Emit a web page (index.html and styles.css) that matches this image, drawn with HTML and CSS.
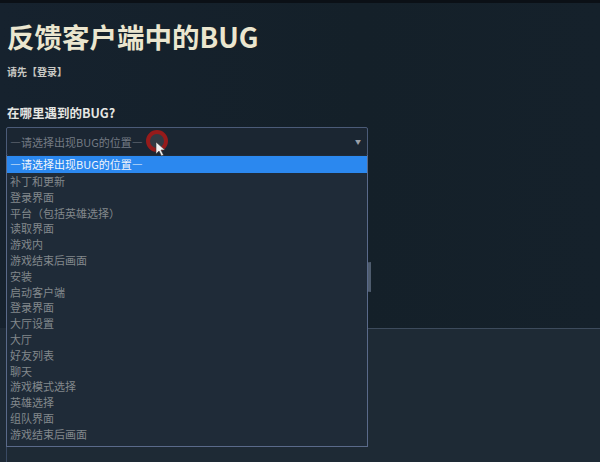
FILE: index.html
```html
<!DOCTYPE html>
<html lang="zh-CN">
<head>
  <meta charset="UTF-8">
  <meta name="viewport" content="width=device-width, initial-scale=1.0">
  <title>反馈客户端中的BUG</title>
  <link rel="stylesheet" href="styles.css">
</head>
<body>
  <div class="topbar"></div>

  <main class="report">
    <h1>反馈客户端中的BUG</h1>
    <p class="login-hint">请先【<a href="#">登录</a>】</p>

    <label class="field-label">在哪里遇到的BUG?</label>
    <div class="select-wrap">
      <div class="select-box">
        <span class="placeholder">—请选择出现BUG的位置—</span>
        <span class="arrow">▼</span>
      </div>

      <!-- open dropdown list -->
      <ul class="options">
        <li class="active">—请选择出现BUG的位置—</li>
        <li>补丁和更新</li>
        <li>登录界面</li>
        <li>平台（包括英雄选择）</li>
        <li>读取界面</li>
        <li>游戏内</li>
        <li>游戏结束后画面</li>
        <li>安装</li>
        <li>启动客户端</li>
        <li>登录界面</li>
        <li>大厅设置</li>
        <li>大厅</li>
        <li>好友列表</li>
        <li>聊天</li>
        <li>游戏模式选择</li>
        <li>英雄选择</li>
        <li>组队界面</li>
        <li>游戏结束后画面</li>
      </ul>

      <!-- recording cursor highlight -->
      <svg class="cursor" width="30" height="30" viewBox="0 0 30 30">
        <circle cx="13" cy="12" r="9" fill="rgba(120,120,120,0.25)" stroke="#961b1b" stroke-width="4"/>
        <path d="M12 13 L12 25 L15 22 L17.5 27 L19.5 26 L17 21 L21 21 Z" fill="#f2f2f2" stroke="#333" stroke-width="0.6"/>
      </svg>
    </div>

    <div class="detail-box"></div>
  </main>

  <section class="lower-panel"></section>
</body>
</html>
```

FILE: styles.css
```css
/* Page base */
body {
  margin: 0;
  font-family: "Noto Sans CJK SC", "Noto Sans", sans-serif;
  background: #1e2a36;
  color: #e4e2d4;
  height: 462px;
  overflow: hidden;
}

.topbar {
  height: 3px;
  background: #0b1016;
}

/* Upper form area */
.report {
  height: 325px;
  padding: 0 7px;
  box-sizing: border-box;
  background: linear-gradient(90deg, #16222e 0%, #142029 60%, #15212b 100%);
}

.report h1 {
  margin: 0;
  padding-top: 14px;
  font-size: 27.5px;
  line-height: 38px;
  font-weight: bold;
  color: #ebe6cf;
}

.login-hint {
  margin: 10px 0 0;
  font-size: 10px;
  line-height: 14px;
  font-weight: bold;
  color: #c9c9c4;
}

.login-hint a {
  color: #c9c9c4;
  text-decoration: none;
}

.field-label {
  display: block;
  margin-top: 25px;
  font-size: 12.5px;
  line-height: 18px;
  font-weight: bold;
  color: #e6e6e2;
}

/* Select field */
.select-wrap {
  position: relative;
  width: 362px;
  margin-top: 5px;
  margin-left: -1px;
  z-index: 2;
}

.select-box {
  height: 27px;
  border: 1px solid #4b5b78;
  border-radius: 2px;
  background: #1b2632;
  display: flex;
  align-items: center;
  justify-content: space-between;
  padding: 0 6px 0 3px;
}

.placeholder {
  font-size: 11px;
  color: #747b84;
}

.arrow {
  font-size: 6px;
  color: #9aa0a8;
}

.options {
  position: absolute;
  top: 28px;
  left: 0;
  right: 0;
  margin: 0;
  padding: 0 0 3px;
  list-style: none;
  background: #1f2b38;
  border: 1px solid #5a6a8a;
  border-top: none;
}

.options li {
  height: 15.8px;
  line-height: 15.8px;
  padding-left: 3px;
  font-size: 11px;
  color: #82888c;
  white-space: nowrap;
}

.options li.active {
  height: 17px;
  line-height: 17px;
  margin: 1px 0 1px;
  background: #2b88ef;
  color: #f2f6fb;
}

.cursor {
  position: absolute;
  left: 138px;
  top: 2px;
}

/* Text field behind the open list */
.detail-box {
  width: 364px;
  height: 30px;
  margin-top: 106px;
  border: 1px solid #3c4858;
  border-right: 3px solid #4e5c6e;
  box-sizing: border-box;
}

/* Lower panel */
.lower-panel {
  height: 134px;
  margin-left: 6px;
  border-top: 1px solid #3d4b5c;
  border-left: 1px solid #3a4a63;
  background: #1e2a35;
}
```
